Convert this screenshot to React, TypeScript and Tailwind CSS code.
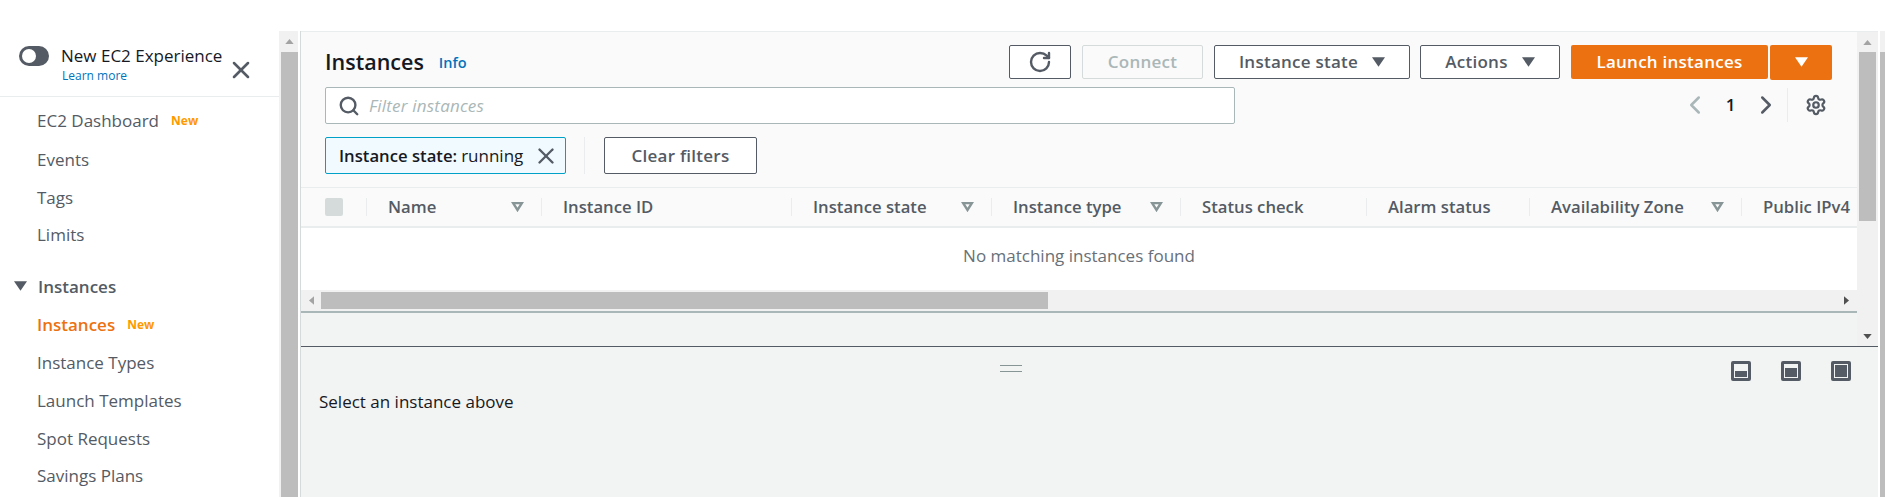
import { ChevronLeft, ChevronRight, RotateCw, Search, Settings, X } from 'lucide-react'

const navTop = [
  { label: 'EC2 Dashboard', isNew: true, h: 'h-[40px]' },
  { label: 'Events', h: 'h-[37.5px]' },
  { label: 'Tags', h: 'h-[37.5px]' },
  { label: 'Limits', h: 'h-[37.5px]' },
]

const navInstances = ['Instance Types', 'Launch Templates', 'Spot Requests', 'Savings Plans']

const columns = [
  { label: 'Name', w: 'w-[175px]', sort: true },
  { label: 'Instance ID', w: 'w-[250px]' },
  { label: 'Instance state', w: 'w-[200px]', sort: true },
  { label: 'Instance type', w: 'w-[189px]', sort: true },
  { label: 'Status check', w: 'w-[186px]' },
  { label: 'Alarm status', w: 'w-[163px]' },
  { label: 'Availability Zone', w: 'w-[212px]', sort: true },
  { label: 'Public IPv4', w: 'w-[200px]' },
]

function Caret({ className }: { className: string }) {
  return (
    <svg viewBox="0 0 14 10" className={className} fill="currentColor">
      <path d="M0 0h14L7 10z" />
    </svg>
  )
}

function SortIcon() {
  return (
    <svg viewBox="0 0 13 10" className="w-[13px] h-[10px] shrink-0 text-[#879596]" fill="none" stroke="currentColor" strokeWidth="2.4">
      <path d="M2 1h9L6.5 8z" />
    </svg>
  )
}

function Arrow({ dir, className }: { dir: 'up' | 'down' | 'left' | 'right'; className: string }) {
  const d = { up: 'M0 6L5 0l5 6z', down: 'M0 0h10L5 6z', left: 'M6 0v10L0 5z', right: 'M0 0v10l6-5z' }[dir]
  const box = dir === 'up' || dir === 'down' ? '0 0 10 6' : '0 0 6 10'
  return (
    <svg viewBox={box} className={className} fill="currentColor">
      <path d={d} />
    </svg>
  )
}

function PanelIcon({ fill }: { fill: string }) {
  return (
    <div className="w-[20px] h-[20px] border-[3px] border-[#545b64] rounded-[2px] bg-[#f2f3f3] flex flex-col justify-end p-[1px]">
      <div className={`bg-[#545b64] ${fill}`} />
    </div>
  )
}

function Button({ children, w }: { children: React.ReactNode; w: string }) {
  return (
    <button className={`${w} h-[34px] border border-[#545b64] rounded-[2px] bg-white text-[#545b64] font-semibold tracking-[0.25px] flex items-center justify-center`}>
      {children}
    </button>
  )
}

export default function App() {
  return (
    <div className="h-screen overflow-hidden bg-white flex flex-col text-[17px] font-['Open_Sans',sans-serif]">
      <div className="h-[31px] shrink-0" />
      <div className="flex flex-1 min-h-0">
        {/* Sidebar */}
        <aside className="w-[279px] shrink-0 text-[#545b64]">
          <div className="h-[66px] border-b border-[#eaeded] flex pl-[19px] pt-[15px] text-[#16191f]">
            <div className="w-[30px] h-[20px] rounded-full bg-[#545b64] p-[3px] shrink-0">
              <div className="w-[14px] h-[14px] rounded-full bg-white" />
            </div>
            <div className="ml-[12px] w-[168px]">
              <div className="leading-[20px] whitespace-nowrap">New EC2 Experience</div>
              <div className="text-[12px] leading-[20px] text-[#0073bb] ml-px">Learn more</div>
            </div>
            <X className="w-[28px] h-[28px] mt-[10px] -ml-[2px] text-[#545b64]" strokeWidth={2.2} />
          </div>
          <nav className="pl-[37px]">
            {navTop.map((item) => (
              <div key={item.label} className={`${item.h} flex items-center first:mt-[4px]`}>
                {item.label}
                {item.isNew && <span className="ml-[12px] text-[12px] font-bold text-[#ff9900]">New</span>}
              </div>
            ))}
            <div className="h-[37.75px] mt-[14px] flex items-center font-semibold -ml-[23px]">
              <Caret className="w-[13px] h-[10px] mr-[11px]" />
              <span>Instances</span>
            </div>
            <div className="h-[37.75px] flex items-center font-semibold text-[#ec7211] mt-[1px]">
              Instances
              <span className="ml-[12px] text-[12px] font-bold text-[#ff9900]">New</span>
            </div>
            {navInstances.map((label) => (
              <div key={label} className="h-[37.75px] flex items-center">
                {label}
              </div>
            ))}
          </nav>
        </aside>

        {/* Nav scrollbar */}
        <div className="w-[19px] shrink-0 bg-[#f1f1f1] pl-[2px] flex flex-col">
          <div className="h-[21px] shrink-0 flex items-center justify-center">
            <Arrow dir="up" className="w-[9px] h-[5px] text-[#a3a3a3]" />
          </div>
          <div className="flex-1 bg-[#bdbdbd]" />
        </div>
        <div className="w-[2px] shrink-0" />

        {/* Main */}
        <main className="w-[1578px] shrink-0 flex flex-col border-l border-[#d5dbdb]">
          <div className="h-[315px] shrink-0 flex border-t border-[#eaeded]">
            <div className="w-[1556px] shrink-0 flex flex-col bg-[#fafafa]">
              <div className="h-[155px] shrink-0 px-[24px] pt-[13px]">
                <div className="flex items-center h-[34px]">
                  <h1 className="text-[21.5px] font-semibold text-[#16191f]">Instances</h1>
                  <span className="ml-[15px] mt-[1px] text-[14.5px] font-semibold text-[#0073bb]">Info</span>
                  <div className="ml-auto flex items-center mr-px">
                    <Button w="w-[62px]">
                      <RotateCw className="w-[24px] h-[24px]" strokeWidth={2.4} />
                    </Button>
                    <button className="ml-[11px] w-[121px] h-[34px] border border-[#d5dbdb] rounded-[2px] text-[#aab7b8] font-semibold tracking-[0.25px]">
                      Connect
                    </button>
                    <div className="ml-[11px]">
                      <Button w="w-[196px]">
                        Instance state
                        <Caret className="w-[13px] h-[10px] ml-[14px]" />
                      </Button>
                    </div>
                    <div className="ml-[10px]">
                      <Button w="w-[140px]">
                        Actions
                        <Caret className="w-[13px] h-[10px] ml-[14px]" />
                      </Button>
                    </div>
                    <button className="ml-[11px] w-[197px] h-[34px] rounded-[2px] bg-[#ec7211] text-white font-semibold tracking-[0.25px]">
                      Launch instances
                    </button>
                    <button className="ml-[2px] w-[62px] h-[35px] rounded-[2px] bg-[#ec7211] text-white flex items-center justify-center">
                      <Caret className="w-[13px] h-[10px]" />
                    </button>
                  </div>
                </div>
                <div className="flex mt-[8px] h-[37px]">
                  <div className="w-[910px] border border-[#aab7b8] rounded-[2px] bg-white flex items-center pl-[12px]">
                    <Search className="w-[22px] h-[22px] text-[#545b64]" strokeWidth={2.6} />
                    <span className="ml-[9px] italic text-[#aab7b8] tracking-[0.2px]">Filter instances</span>
                  </div>
                  <div className="ml-auto flex items-center pr-[6px] mt-[-2px]">
                    <ChevronLeft className="w-[30px] h-[30px] text-[#aab7b8]" strokeWidth={2} />
                    <span className="w-[41px] text-center text-[#16191f] font-semibold">1</span>
                    <ChevronRight className="w-[30px] h-[30px] text-[#545b64]" strokeWidth={2} />
                    <div className="ml-[6px] h-[34px] border-l border-[#eaeded] pl-[17px] flex items-center">
                      <Settings className="w-[22px] h-[22px] text-[#545b64]" strokeWidth={2.4} />
                    </div>
                  </div>
                </div>
                <div className="flex mt-[13px]">
                  <div className="w-[241px] h-[37px] border border-[#00a1c9] rounded-[2px] bg-[#f1faff] flex items-center pl-[13px] text-[#16191f] whitespace-nowrap">
                    <span className="font-semibold text-[16.7px]">Instance state:</span>
                    <span className="ml-[4px]">running</span>
                    <X className="w-[26px] h-[26px] ml-auto mr-[6px] text-[#545b64]" strokeWidth={2.2} />
                  </div>
                  <div className="ml-[18px] h-[37px] border-l border-[#eaeded]" />
                  <button className="ml-[19px] w-[153px] h-[37px] border border-[#545b64] rounded-[2px] bg-white text-[#545b64] font-semibold tracking-[0.25px]">
                    Clear filters
                  </button>
                </div>
              </div>

              {/* Table header */}
              <div className="h-[41px] shrink-0 border-t border-[#eaeded] border-b-2 flex items-center overflow-hidden text-[16.7px] text-[#545b64] font-semibold whitespace-nowrap">
                <div className="w-[65px] shrink-0 pl-[24px]">
                  <div className="w-[18px] h-[18px] rounded-[2px] bg-[#d5dbdb]" />
                </div>
                {columns.map((col) => (
                  <div key={col.label} className={`${col.w} shrink-0 h-[18px] border-l border-[#eaeded] pl-[21px] pr-[17px] flex items-center justify-between`}>
                    <span>{col.label}</span>
                    {col.sort && <SortIcon />}
                  </div>
                ))}
              </div>

              <div className="h-[62px] shrink-0 bg-white flex items-center justify-center pb-[7px] text-[#687078]">
                No matching instances found
              </div>

              {/* Horizontal scrollbar */}
              <div className="h-[21px] shrink-0 bg-[#f1f1f1] flex items-center py-[2px]">
                <div className="w-[20px] shrink-0 flex justify-center">
                  <Arrow dir="left" className="w-[5px] h-[9px] text-[#a3a3a3]" />
                </div>
                <div className="w-[727px] h-[17px] bg-[#bdbdbd]" />
                <Arrow dir="right" className="w-[5px] h-[9px] ml-auto mr-[8px] text-[#505050]" />
              </div>
              <div className="h-[2px] shrink-0 bg-[#aab7b8]" />
              <div className="flex-1 bg-[#f2f3f3]" />
            </div>

            {/* Content scrollbar */}
            <div className="w-[21px] shrink-0 bg-[#f1f1f1] flex flex-col pl-[2px] pr-[2px]">
              <div className="h-[20px] shrink-0 flex items-center justify-center">
                <Arrow dir="up" className="w-[9px] h-[5px] text-[#a3a3a3]" />
              </div>
              <div className="h-[169px] shrink-0 bg-[#bdbdbd]" />
              <div className="flex-1 flex items-end justify-center pb-[7px]">
                <Arrow dir="down" className="w-[9px] h-[5px] text-[#505050]" />
              </div>
            </div>
          </div>

          {/* Split panel */}
          <div className="flex-1 border-t border-[#545b64] bg-[#f2f3f3] pt-[14px] px-[18px] text-[#16191f]">
            <div className="flex items-start h-[20px]">
              <div className="ml-[681px] mt-[4px] w-[22px] h-[7px] border-y border-[#879596]" />
              <div className="ml-auto flex gap-[30px] mr-[9px]">
                <PanelIcon fill="h-[6px]" />
                <PanelIcon fill="h-[9px]" />
                <PanelIcon fill="h-full" />
              </div>
            </div>
            <div className="mt-[11px] leading-[20px]">Select an instance above</div>
          </div>
        </main>

        {/* Page scrollbar, cut off by the window edge */}
        <div className="w-[2px] shrink-0" />
        <div className="flex-1 flex flex-col bg-[#f1f1f1]">
          <div className="h-[21px] shrink-0" />
          <div className="flex-1 bg-[#bdbdbd]" />
        </div>
      </div>
    </div>
  )
}
